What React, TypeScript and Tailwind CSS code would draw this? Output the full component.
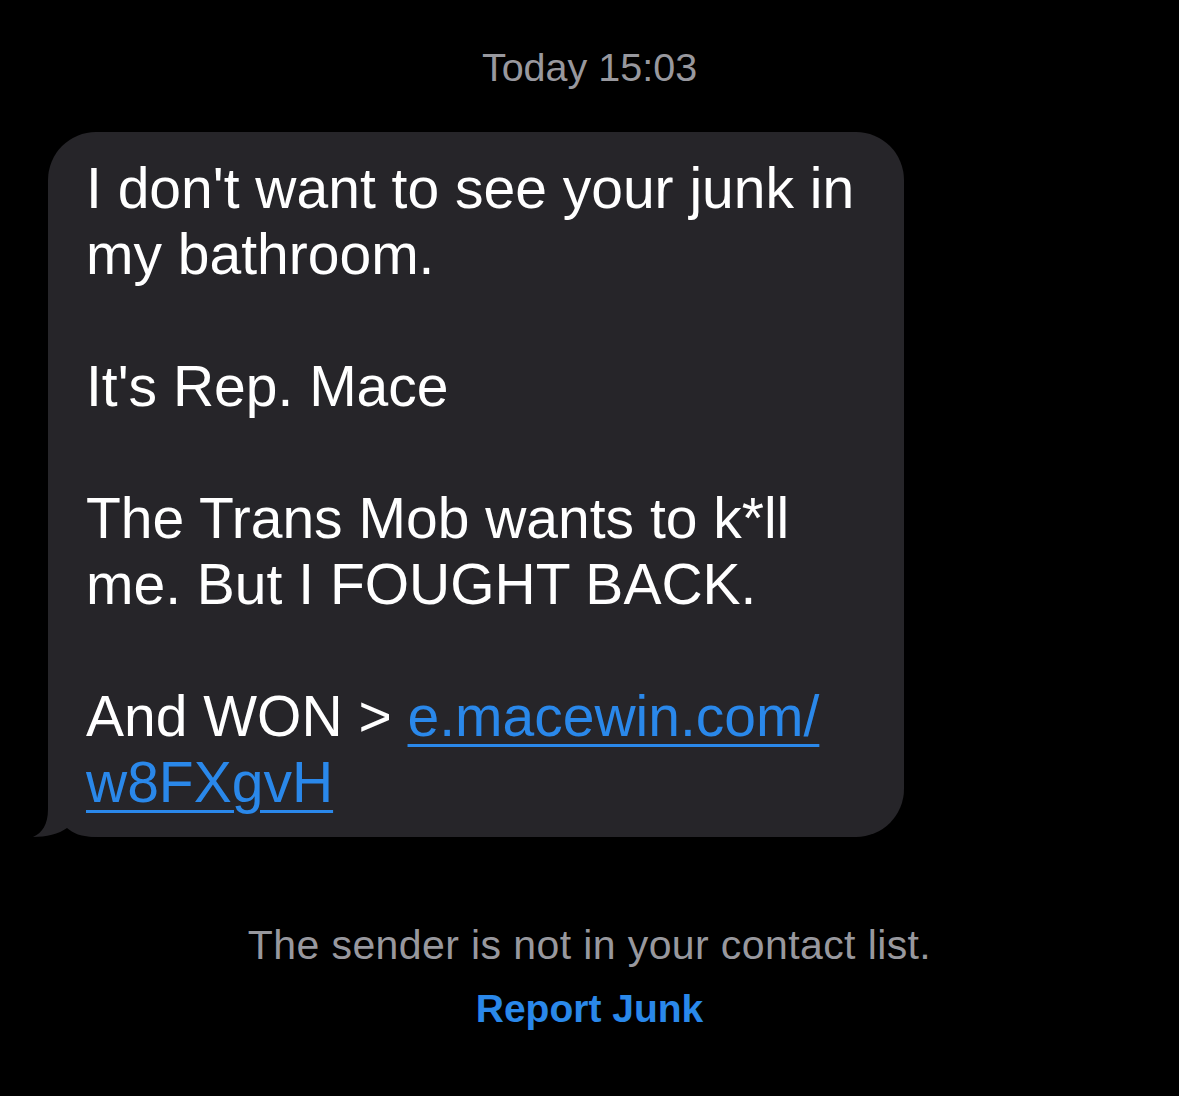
import type { ReactNode } from "react";

const FONT = { fontFamily: '"Liberation Sans", Arial, sans-serif' };

// 메시지 본문 줄 단위 (빈 문자열 = 빈 줄)
const LINES: ReactNode[] = [
  "I don't want to see your junk in",
  "my bathroom.",
  "",
  "It's Rep. Mace",
  "",
  "The Trans Mob wants to k*ll",
  "me. But I FOUGHT BACK.",
  "",
  <>
    And WON &gt;{" "}
    <a className="text-[#2a88ea] underline decoration-[3px] underline-offset-[8px]">e.macewin.com/</a>
  </>,
  <a className="text-[#2a88ea] underline decoration-[3px] underline-offset-[8px]">w8FXgvH</a>,
];

// 받은 메시지 말풍선 꼬리
function Tail() {
  return (
    <svg
      className="absolute bottom-0 left-[-16px]"
      width="66"
      height="52"
      viewBox="0 0 66 52"
    >
      <path
        d="M16 0 L16 24 C16 40 10 48 1 52 C14 52 27 49 35 43 C41 48 48 52 66 52 L66 0 Z"
        fill="#262529"
      />
    </svg>
  );
}

export default function App() {
  return (
    <div className="flex min-h-[1096px] w-full flex-col bg-black" style={FONT}>
      {/* 시간 */}
      <p className="pt-[45px] text-center text-[39.5px] leading-[44px] text-[#98989e]">Today 15:03</p>

      {/* 말풍선 */}
      <div className="relative ml-[48px] mt-[43px] w-[856px] rounded-[48px] bg-[#262529] pb-[22px] pl-[38px] pr-[30px] pt-[23px]">
        <Tail />
        <div className="relative text-[57px] leading-[66px] text-white">
          {LINES.map((line, i) => (
            <div key={i} className="h-[66px] whitespace-nowrap">
              {line}
            </div>
          ))}
        </div>
      </div>

      {/* 모르는 발신자 안내 */}
      <p className="mt-[86px] text-center text-[41px] leading-[44px] tracking-[0.4px] text-[#98989e]">
        The sender is not in your contact list.
      </p>
      <p className="mt-[20px] text-center text-[39px] font-bold leading-[44px] text-[#2a88ea]">Report Junk</p>
    </div>
  );
}
